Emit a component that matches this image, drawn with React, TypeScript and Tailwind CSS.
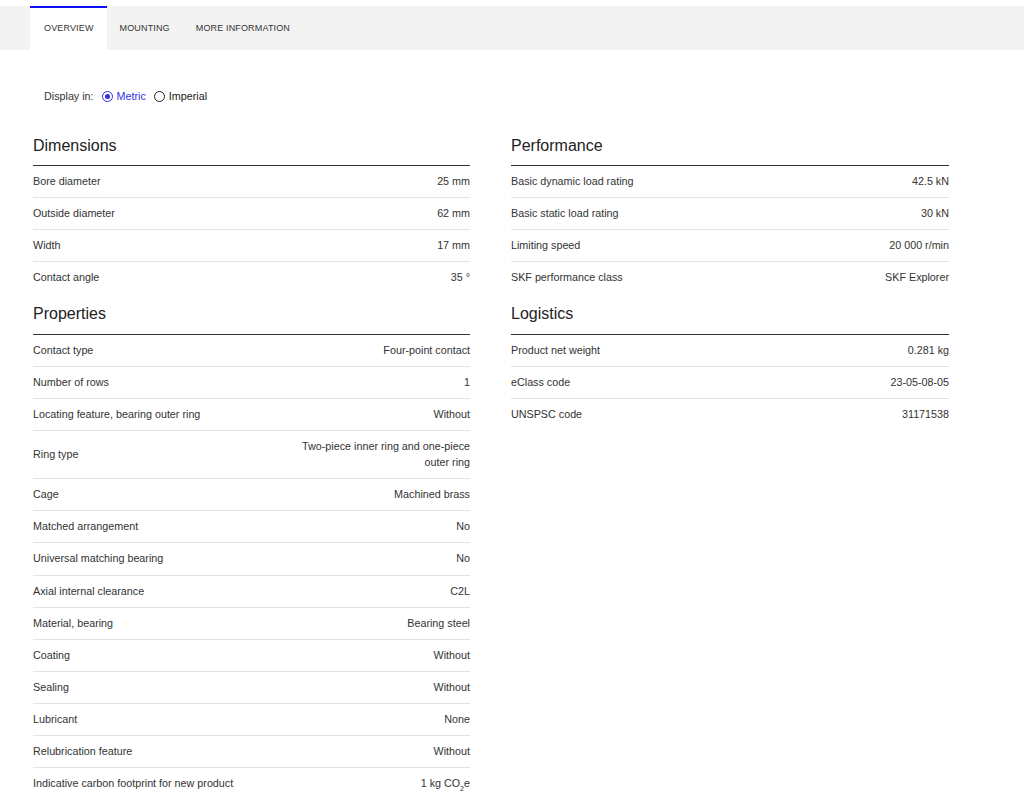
import React from 'react';

type Row = { label: string; value: React.ReactNode };

const dimensions: Row[] = [
  { label: 'Bore diameter', value: '25 mm' },
  { label: 'Outside diameter', value: '62 mm' },
  { label: 'Width', value: '17 mm' },
  { label: 'Contact angle', value: '35 °' },
];

const properties: Row[] = [
  { label: 'Contact type', value: 'Four-point contact' },
  { label: 'Number of rows', value: '1' },
  { label: 'Locating feature, bearing outer ring', value: 'Without' },
  { label: 'Ring type', value: 'Two-piece inner ring and one-piece outer ring' },
  { label: 'Cage', value: 'Machined brass' },
  { label: 'Matched arrangement', value: 'No' },
  { label: 'Universal matching bearing', value: 'No' },
  { label: 'Axial internal clearance', value: 'C2L' },
  { label: 'Material, bearing', value: 'Bearing steel' },
  { label: 'Coating', value: 'Without' },
  { label: 'Sealing', value: 'Without' },
  { label: 'Lubricant', value: 'None' },
  { label: 'Relubrication feature', value: 'Without' },
  {
    label: 'Indicative carbon footprint for new product',
    value: (
      <>
        1 kg CO<sub className="text-[7px] align-[-2px] leading-none">2</sub>e
      </>
    ),
  },
];

const performance: Row[] = [
  { label: 'Basic dynamic load rating', value: '42.5 kN' },
  { label: 'Basic static load rating', value: '30 kN' },
  { label: 'Limiting speed', value: '20 000 r/min' },
  { label: 'SKF performance class', value: 'SKF Explorer' },
];

const logistics: Row[] = [
  { label: 'Product net weight', value: '0.281 kg' },
  { label: 'eClass code', value: '23-05-08-05' },
  { label: 'UNSPSC code', value: '31171538' },
];

const Section = ({ title, rows }: { title: string; rows: Row[] }) => (
  <div>
    <h3 className="h-[41px] flex items-center border-b border-[#333] text-[16px] text-[#222] pt-[1px]">
      {title}
    </h3>
    {rows.map((r) => (
      <div
        key={r.label}
        className="flex justify-between gap-6 pt-[7px] pb-[8.15px] leading-4 text-[10.75px] text-[#333] border-b border-[#e3e3e3] last:border-b-0"
      >
        <span className="self-center">{r.label}</span>
        <span className="text-right max-w-[180px]">{r.value}</span>
      </div>
    ))}
  </div>
);

export default function App() {
  return (
    <div className="min-h-[803px] bg-white pt-[6px] font-['Liberation_Sans',Arial,sans-serif]">
      {/* Tabs */}
      <div className="h-[44px] bg-[#f3f3f3] flex pl-[30px] text-[9px] font-medium text-[#333] tracking-[0.15px]">
        <div className="pl-[14px] pr-[13px] bg-white border-t-2 border-[#1010f5] flex items-center">
          OVERVIEW
        </div>
        <div className="px-[13px] flex items-center pt-[2px]">MOUNTING</div>
        <div className="px-[13px] flex items-center pt-[2px]">MORE INFORMATION</div>
      </div>

      {/* Units */}
      <div className="mt-[38px] pl-[44px] flex items-center h-4 text-[10.75px] text-[#333]">
        <span>Display in:</span>
        <label className="ml-[8px] flex items-center gap-[4px] text-[#2f2fe6]">
          <span className="w-[11px] h-[11px] rounded-full border-[1.5px] border-[#2f2fe6] flex items-center justify-center">
            <span className="w-[5px] h-[5px] rounded-full bg-[#2f2fe6]" />
          </span>
          Metric
        </label>
        <label className="ml-[8px] flex items-center gap-[4px] text-[#222]">
          <span className="w-[11px] h-[11px] rounded-full border-[1.5px] border-[#222]" />
          Imperial
        </label>
      </div>

      {/* Spec tables */}
      <div className="mt-[21px] pl-[33px] grid grid-cols-[437px_438px] gap-x-[41px]">
        <div>
          <Section title="Dimensions" rows={dimensions} />
          <Section title="Properties" rows={properties} />
        </div>
        <div>
          <Section title="Performance" rows={performance} />
          <Section title="Logistics" rows={logistics} />
        </div>
      </div>
    </div>
  );
}
